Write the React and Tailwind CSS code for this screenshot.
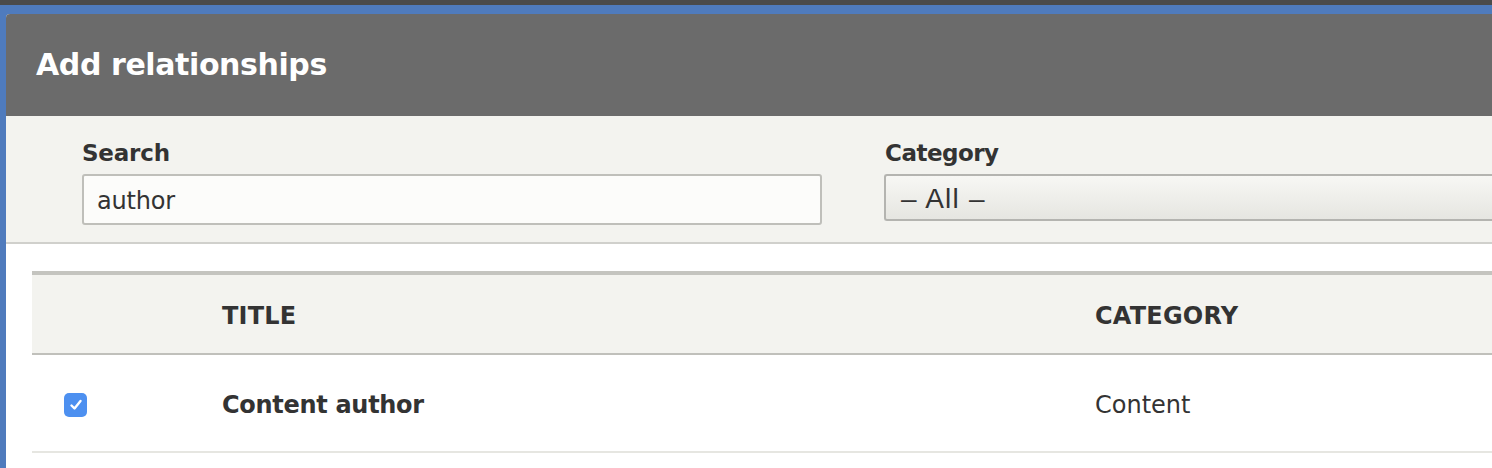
import React from 'react';

const font = { fontFamily: '"DejaVu Sans", "Noto Sans", sans-serif' };

const App = () => {
    return (
        <div className="w-full h-[468px] bg-[#4b4b4b] pt-[5px] overflow-hidden" style={font}>
            <div className="h-full bg-[#4f7bbd] pl-[6px] pt-[9px]">
                <div className="h-full bg-white rounded-tl-[4px] overflow-hidden flex flex-col">
                    {/* Dialog title */}
                    <div className="h-[102px] shrink-0 bg-[#6b6b6b] flex items-center pl-[30px]">
                        <h1 className="text-[30px] font-bold text-white tracking-[-0.4px] leading-none">Add relationships</h1>
                    </div>

                    {/* Filters */}
                    <div className="h-[128px] shrink-0 bg-[#f3f3ef] border-b-2 border-[#d0d0cc] flex pl-[76px] pt-[20px]">
                        <div className="w-[740px] shrink-0">
                            <label className="block text-[23px] font-bold text-[#333] leading-[34px] tracking-[-0.2px]">Search</label>
                            <div className="mt-[4px] h-[51px] border-2 border-[#bfbfba] rounded-[3px] bg-[#fcfcfa] flex items-center px-[13px] pt-[3px] text-[24px] text-[#333] tracking-[-0.2px]">author</div>
                        </div>
                        <div className="ml-[62px] flex-1">
                            <label className="block pl-[1px] text-[23px] font-bold text-[#333] leading-[34px] tracking-[-0.5px]">Category</label>
                            <div className="mt-[4px] h-[47px] border-2 border-r-0 border-[#b4b4b0] rounded-l-[3px] bg-gradient-to-b from-[#f7f7f4] to-[#e6e6e1] flex items-center px-[15px] pt-[2px] text-[28px] text-[#333] tracking-[1.2px]" style={{ fontFamily: '"Liberation Sans", sans-serif' }}>– All –</div>
                        </div>
                    </div>

                    {/* Results table */}
                    <div className="pl-[26px] pt-[27px] flex-1">
                        <div className="border-t-[4px] border-[#c4c4bf]">
                            <div className="h-[80px] bg-[#f3f3ef] border-b-2 border-[#c0c0bb] flex items-center pt-[4px] text-[24px] font-bold text-[#333] tracking-[0.2px]">
                                <div className="w-[190px] shrink-0"></div>
                                <div className="w-[873px] shrink-0">TITLE</div>
                                <div>CATEGORY</div>
                            </div>
                            <div className="h-[98px] border-b-2 border-[#e6e6e1] flex items-center pt-[4px] text-[24px] text-[#333]">
                                <div className="w-[190px] shrink-0 pl-[32px] flex items-center">
                                    <span className="w-[23px] h-[24px] rounded-[5px] bg-[#4d90f0] flex items-center justify-center">
                                        <svg width="16" height="16" viewBox="0 0 16 16" fill="none">
                                            <path d="M3.5 8.5 L6.5 11.5 L12.5 4" stroke="white" strokeWidth="2.4" strokeLinecap="round" strokeLinejoin="round" />
                                        </svg>
                                    </span>
                                </div>
                                <div className="w-[873px] shrink-0 font-bold tracking-[-0.3px]">Content author</div>
                                <div>Content</div>
                            </div>
                        </div>
                    </div>
                </div>
            </div>
        </div>
    );
};

export default App;
